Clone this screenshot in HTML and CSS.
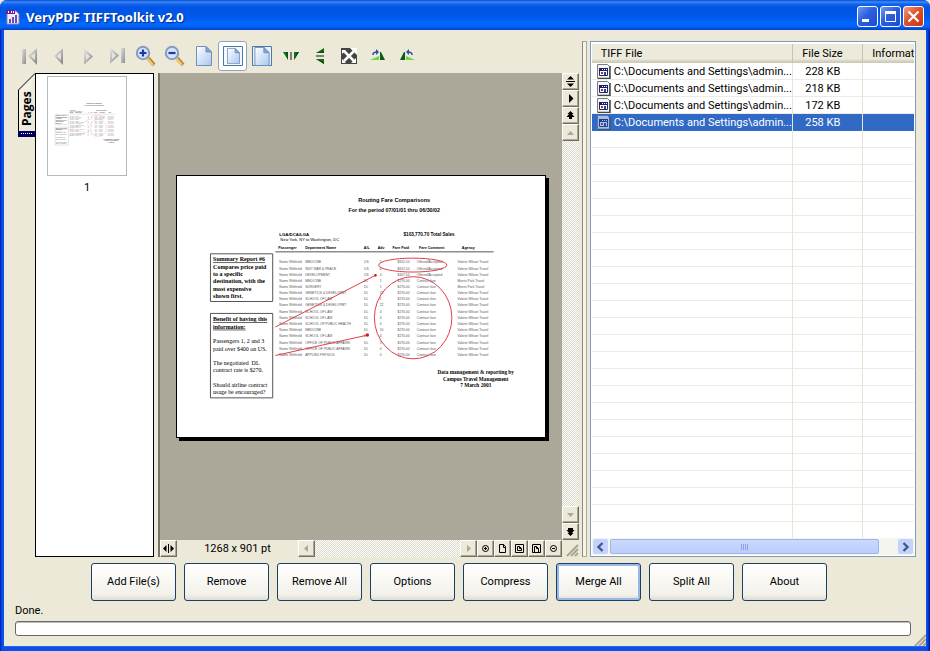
FILE: index.html
```html
<!DOCTYPE html>
<html lang="en">
<head>
<meta charset="utf-8">
<title>VeryPDF TIFFToolkit v2.0</title>
<link rel="stylesheet" href="styles.css">
</head>
<body>
<svg class="defs" aria-hidden="true">
  <defs>
    <linearGradient id="grey" x1="0" y1="0" x2="1" y2="1"><stop offset="0" stop-color="#dededc"/><stop offset="1" stop-color="#8e8e8e"/></linearGradient>
    <linearGradient id="paper" x1="0" y1="0" x2="1" y2="1"><stop offset="0" stop-color="#ffffff"/><stop offset="1" stop-color="#a9c6ee"/></linearGradient>
    <symbol id="file-icon" viewBox="0 0 14 15">
      <path d="M.5 .5h10l2 2v12h-12z" fill="#f4f4f4" stroke="#777a80"/>
      <path d="M13 2v12.500H1" fill="none" stroke="#44474c" stroke-width="1.500"/>
      <path d="M2.500 4.500h8v7h-8z" fill="#fff" stroke="#202860"/>
      <path d="M2 4h9v3H2z" fill="#14206e"/>
      <path d="M5 5h1v1H5zM7 5h1v1H7zM9 5h1v1H9z" fill="#fff"/>
      <path d="M4 8h2v2H4z" fill="#c02828"/><path d="M7 8h2v3H7z" fill="#2438c8"/>
    </symbol>
    <symbol id="page-shape" viewBox="0 0 16 20">
      <path d="M.5.5h9.500l5.500 5.500v13.500H.5z" fill="url(#paper)" stroke="#6f8fbc"/>
      <path d="M10 .5V6h5.500z" fill="#86a4d0" stroke="#6f8fbc"/>
    </symbol>
  </defs>
</svg>

<div class="window">
  <header class="titlebar">
    <svg class="app-icon" width="14" height="16" viewBox="0 0 14 16"><path d="M1 2h9l3 3v10H1z" fill="#eeeaf8" stroke="#8b86b8"/><path d="M0 1h9v4H0z" fill="#6a1fa0"/><path d="M2 2h1v2H2zM5 2h1v2H5zM7 2h1v2H7z" fill="#fff"/><path d="M3 10h2v4H3zM6 8h2v6H6zM9 6h2v8H9z" fill="#6d4fb0"/></svg>
    <h1>VeryPDF TIFFToolkit v2.0</h1>
    <div class="caption-buttons">
      <button class="caption" type="button" aria-label="Minimize"><svg width="19" height="19" viewBox="0 0 19 19"><path d="M4 12h7v3H4z" fill="#fff"/></svg></button>
      <button class="caption" type="button" aria-label="Maximize"><svg width="19" height="19" viewBox="0 0 19 19"><path d="M4.500 5h10v9.500h-10z" fill="none" stroke="#fff"/><path d="M4 4h11v3H4z" fill="#fff"/></svg></button>
      <button class="caption close" type="button" aria-label="Close"><svg width="19" height="19" viewBox="0 0 19 19"><path d="M4.500 4.500l10 10M14.500 4.500l-10 10" stroke="#fff" stroke-width="2.200"/></svg></button>
    </div>
  </header>

  <main class="content">
    <div class="main-row">
      <section class="viewer">
        <div class="toolbar">
          <button class="tool" type="button" aria-label="First page"><svg width="20" height="20" viewBox="0 0 20 20"><path d="M2 3h4v15H2z" fill="url(#grey)"/><path d="M16 4.500v12L9.500 10z" fill="#e6e4dc" stroke="url(#grey)" stroke-width="2"/></svg></button>
          <button class="tool" type="button" aria-label="Previous page"><svg width="20" height="20" viewBox="0 0 20 20"><path d="M13 4.500v12L6.500 10z" fill="#e6e4dc" stroke="url(#grey)" stroke-width="2"/></svg></button>
          <button class="tool" type="button" aria-label="Next page"><svg width="20" height="20" viewBox="0 0 20 20"><path d="M7 4.500v12l6.500-6z" fill="#e6e4dc" stroke="url(#grey)" stroke-width="2"/></svg></button>
          <button class="tool" type="button" aria-label="Last page"><svg width="20" height="20" viewBox="0 0 20 20"><path d="M14 2h4v15h-4z" fill="url(#grey)"/><path d="M4 3.500v12l6.500-6z" fill="#e6e4dc" stroke="url(#grey)" stroke-width="2"/></svg></button>
          <button class="tool" type="button" aria-label="Zoom in"><svg width="22" height="22" viewBox="0 0 22 22"><path d="M13 13l6 7" stroke="#b88430" stroke-width="4"/><path d="M12 13l6 7" stroke="#f1cd78" stroke-width="2"/><circle cx="8" cy="8" r="6.200" fill="#d4e4fa" stroke="#8a9abc" stroke-width="2"/><path d="M4.500 8h7M8 4.500v7" stroke="#1c3aa0" stroke-width="2.200"/></svg></button>
          <button class="tool" type="button" aria-label="Zoom out"><svg width="22" height="22" viewBox="0 0 22 22"><path d="M13 13l6 7" stroke="#b88430" stroke-width="4"/><path d="M12 13l6 7" stroke="#f1cd78" stroke-width="2"/><circle cx="8" cy="8" r="6.200" fill="#d4e4fa" stroke="#8a9abc" stroke-width="2"/><path d="M4.500 8h7" stroke="#1c3aa0" stroke-width="2.200"/></svg></button>
          <button class="tool" type="button" aria-label="Actual size"><svg width="20" height="20" viewBox="0 0 20 20"><use href="#page-shape" x="2" y="0" width="16" height="20"/></svg></button>
          <button class="tool active" type="button" aria-label="Fit page"><svg width="20" height="20" viewBox="0 0 20 20"><path d="M.5.5h19v19H.5z" fill="#f4f8ff" stroke="#4f77ad"/><use href="#page-shape" x="4" y="2" width="13" height="16"/></svg></button>
          <button class="tool" type="button" aria-label="Fit width"><svg width="20" height="20" viewBox="0 0 20 20"><path d="M.5.5h19v19H.5z" fill="#e9f1fd" stroke="#4f77ad"/><use href="#page-shape" x="2" y="1" width="16" height="19"/></svg></button>
          <button class="tool" type="button" aria-label="Flip horizontally"><svg width="18" height="18" viewBox="0 0 18 18"><path d="M1 5h5v8zM17 5h-5v8z" fill="#107018"/><path d="M4 5h2v8zM17 5h-2l-3 8z" fill="#084c10"/><path d="M9 5v8" stroke="#111"/></svg></button>
          <button class="tool" type="button" aria-label="Flip vertically"><svg width="18" height="18" viewBox="0 0 18 18"><path d="M13 1v5H5zM13 17v-5H5z" fill="#107018"/><path d="M13 4v2H5zM13 17v-2l-8-3z" fill="#084c10"/><path d="M5 9h8" stroke="#111"/></svg></button>
          <button class="tool" type="button" aria-label="Full screen"><svg width="16" height="16" viewBox="0 0 16 16"><path d="M0 0h16v16H0z" fill="#444"/><path d="M3 3l10 10M13 3L3 13" stroke="#fff" stroke-width="2.500"/><path d="M1 2h4L1 6zM16 0v7L9 0zM1 15v-4l4 4zM15 15h-5l5-5z" fill="#fff"/></svg></button>
          <button class="tool" type="button" aria-label="Rotate right"><svg width="18" height="18" viewBox="0 0 18 18"><path d="M1 13l9-4v4z" fill="#6cd83c"/><path d="M11 13V5h1l4 8z" fill="#0c5c18"/><path d="M4 8c0-2 1-3 4-3" fill="none" stroke="#2a50b0" stroke-width="1.500"/><path d="M7 2v6l3-3z" fill="#2a50b0"/></svg></button>
          <button class="tool" type="button" aria-label="Rotate left"><svg width="18" height="18" viewBox="0 0 18 18"><path d="M17 13L8 9v4z" fill="#6cd83c"/><path d="M7 13V5H6l-4 8z" fill="#0c5c18"/><path d="M14 8c0-2-1-3-4-3" fill="none" stroke="#2a50b0" stroke-width="1.500"/><path d="M11 2v6L8 5z" fill="#2a50b0"/></svg></button>
        </div>

        <div class="workspace">
          <button class="pages-tab" type="button" aria-label="Pages">
            <svg width="17" height="65" viewBox="0 0 17 65"><path d="M17 .5L.5 17v41" fill="#f3f1e6" stroke="#000"/><path d="M0 58h17v6H0z" fill="#000064"/><path d="M3 60.500h12" stroke="#fff" stroke-dasharray="1 1"/><text class="tab-text" transform="translate(13 53) rotate(-90)">Pages</text></svg>
          </button>
          <div class="thumbs">
            <figure>
              <div class="thumb"><svg viewBox="0 0 1110 789"><use href="#document"/></svg></div>
              <figcaption>1</figcaption>
            </figure>
          </div>
          <div class="document-pane">
            <div class="canvas">
              <svg class="sheet" viewBox="0 0 1110 789" role="img" aria-label="Routing Fare Comparisons">
                <g id="document">
                  <g class="sans bold">
                    <text class="s17" x="656" y="80" text-anchor="middle">Routing Fare Comparisons</text>
                    <text class="s16" x="656" y="110" text-anchor="middle">For the period 07/01/01 thru 06/30/02</text>
                    <text class="s13" x="309" y="181">LGA/DCA/LGA</text>
                    <text class="s14" x="684" y="180">$103,770.70 Total Sales</text>
                  </g>
                  <text class="sans s12" x="312" y="197">New York, NY to Washington, DC</text>
                  <g class="sans bold s11">
                    <text x="306" y="220">Passenger</text><text x="387" y="220">Department Name</text><text x="564" y="220">A/L</text><text x="606" y="220">Adv</text><text x="651" y="220">Fare Paid</text><text x="731" y="220">Fare Comment</text><text x="860" y="220">Agency</text>
                  </g>
                  <path d="M297 229h659" stroke="#555" stroke-width="3"/>
                  <g id="fare-rows" class="sans s10 rows"></g>
                  <g fill="#fff" stroke="#555" stroke-width="3"><path d="M101 235h188v144H101zM101 415h188v255H101z"/></g>
                  <g class="serif bold s18">
                    <text x="109" y="258" text-decoration="underline">Summary Report #6</text><text x="109" y="280">Compares price paid</text><text x="109" y="302">to a specific</text><text x="109" y="324">destination, with the</text><text x="109" y="346">most expensive</text><text x="109" y="368">shown first.</text>
                    <text x="109" y="439" text-decoration="underline">Benefit of having this</text><text x="109" y="461" text-decoration="underline">information:</text>
                  </g>
                  <g class="serif s18">
                    <text x="109" y="505">Passengers 1, 2 and 3</text><text x="109" y="527">paid over $400 on US.</text><text x="109" y="571">The negotiated&#160; DL</text><text x="109" y="593">contract rate is $270.</text><text x="109" y="637">Should airline contract</text><text x="109" y="659">usage be encouraged?</text>
                  </g>
                  <g class="serif bold s16" text-anchor="middle">
                    <text x="902" y="599">Data management &amp; reporting by</text><text x="902" y="618">Campus Travel Management</text><text x="902" y="637">7 March 2003</text>
                  </g>
                  <g fill="none" stroke="#df3d4a" stroke-width="3"><ellipse cx="712" cy="269" rx="103" ry="21"/><ellipse cx="713" cy="428" rx="117" ry="124"/><path d="M297 456L599 300M297 542L577 480"/></g>
                  <g fill="#c8202e"><circle cx="599" cy="300" r="4"/><circle cx="575" cy="480" r="5"/></g>
                </g>
              </svg>
            </div>
            <div class="vscroll">
              <button class="sb" type="button" aria-label="Fit height"><svg width="11" height="11"><path d="M5.500 0L9 3.500H2zM5.500 11L9 7.500H2zM1 5h9v1H1z"/></svg></button>
              <button class="sb" type="button" aria-label="Next"><svg width="11" height="11"><path d="M4 1v9l4.500-4.500z"/></svg></button>
              <button class="sb" type="button" aria-label="Top"><svg width="11" height="11"><path d="M5.500 1L8.500 4H7l2.500 3H7v2H4V7H1.500L4 4H2.500z"/></svg></button>
              <button class="sb off" type="button" aria-label="Up" disabled><svg width="11" height="11"><path d="M5.500 4L9 8H2z"/></svg></button>
              <div class="track"></div>
              <button class="sb off" type="button" aria-label="Down" disabled><svg width="11" height="11"><path d="M5.500 8L9 4H2z"/></svg></button>
              <button class="sb" type="button" aria-label="Bottom"><svg width="11" height="11"><path d="M5.500 10L8.500 7H7l2.500-3H8V2H3v2H1.500L4 7H2.500z"/></svg></button>
            </div>
            <div class="hscroll">
              <button class="sb" type="button" aria-label="Toggle pages"><svg width="11" height="11"><path d="M0 5.500L3.500 2v7zM11 5.500L7.500 2v7zM5 1h1v9H5z"/></svg></button>
              <span class="page-size">1268 x 901 pt</span>
              <button class="sb off" type="button" aria-label="Left" disabled><svg width="11" height="11"><path d="M3 5.500L7 2v7z"/></svg></button>
              <div class="track"></div>
              <button class="sb off" type="button" aria-label="Right" disabled><svg width="11" height="11"><path d="M8 5.500L4 2v7z"/></svg></button>
              <button class="sb line" type="button" aria-label="Zoom in"><svg width="11" height="11"><circle cx="5.500" cy="5.500" r="3"/><path d="M4 5.500h3M5.500 4v3"/></svg></button>
              <button class="sb line" type="button" aria-label="Actual size"><svg width="11" height="11"><path d="M2.500 1.500h4l2 2v6h-6zM6.500 1.500v3h2"/></svg></button>
              <button class="sb line" type="button" aria-label="Fit page"><svg width="11" height="11"><path d="M1.500 1.500h8v8h-8zM3.500 3.500h2l2 2v2h-4zM5.500 3.500v2h2"/></svg></button>
              <button class="sb line" type="button" aria-label="Fit width"><svg width="11" height="11"><path d="M1.500 1.500h8v8h-8zM3.500 9V3.500h2l2 2V9M5.500 3.500v2h2"/></svg></button>
              <button class="sb line" type="button" aria-label="Zoom out"><svg width="11" height="11"><circle cx="5.500" cy="5.500" r="3"/><path d="M4 5.500h3"/></svg></button>
            </div>
            <svg class="grip" width="17" height="17" viewBox="0 0 17 17"><path d="M5 16L16 5M9 16l7-7M13 16l3-3" stroke="#aaa692" stroke-width="2"/></svg>
          </div>
        </div>
      </section>

      <div class="splitter"></div>

      <section class="file-list">
        <div class="list-body">
          <table>
            <colgroup><col class="col-name"><col class="col-size"><col></colgroup>
            <thead><tr><th>TIFF File</th><th>File Size</th><th>Information</th></tr></thead>
            <tbody>
              <tr><td><div class="name"><svg width="14" height="15"><use href="#file-icon"/></svg><span>C:\Documents and Settings\admin...</span></div></td><td>228 KB</td><td></td></tr>
              <tr><td><div class="name"><svg width="14" height="15"><use href="#file-icon"/></svg><span>C:\Documents and Settings\admin...</span></div></td><td>218 KB</td><td></td></tr>
              <tr><td><div class="name"><svg width="14" height="15"><use href="#file-icon"/></svg><span>C:\Documents and Settings\admin...</span></div></td><td>172 KB</td><td></td></tr>
              <tr class="selected"><td><div class="name"><svg width="14" height="15"><use href="#file-icon"/></svg><span>C:\Documents and Settings\admin...</span></div></td><td>258 KB</td><td></td></tr>
            </tbody>
          </table>
        </div>
        <div class="xp-scroll">
          <button class="xp-arrow" type="button" aria-label="Scroll left"><svg width="9" height="10" viewBox="0 0 9 10"><path d="M6.500 1L2.500 5l4 4" fill="none" stroke="#42598c" stroke-width="2.400"/></svg></button>
          <div class="xp-thumb"><i></i><i></i><i></i><i></i></div>
          <button class="xp-arrow" type="button" aria-label="Scroll right"><svg width="9" height="10" viewBox="0 0 9 10"><path d="M2.500 1l4 4-4 4" fill="none" stroke="#42598c" stroke-width="2.400"/></svg></button>
        </div>
      </section>
    </div>

    <div class="actions">
      <button type="button">Add File(s)</button>
      <button type="button">Remove</button>
      <button type="button">Remove All</button>
      <button type="button">Options</button>
      <button type="button">Compress</button>
      <button type="button" class="default">Merge All</button>
      <button type="button">Split All</button>
      <button type="button">About</button>
    </div>
    <div class="status" id="status">Done.</div>
    <div class="progress" role="progressbar" aria-labelledby="status"></div>
    <svg class="size-grip" width="12" height="12" viewBox="0 0 12 12"><path d="M1 12L12 1M5 12l7-7M9 12l3-3" stroke="#aaa692" stroke-width="2"/></svg>
  </main>
</div>
<script src="script.js"></script>
</body>
</html>
```
FILE: styles.css
```css
* { box-sizing: border-box; }

body {
  margin: 0;
  background: #ece9d8;
  color: #000;
  font: 11px/14px Roboto, "Liberation Sans", sans-serif;
}

button { padding: 0; border: 0; background: none; font: inherit; color: inherit; }
svg { display: block; flex: none; }
.defs { position: absolute; width: 0; height: 0; }

.window {
  display: flex;
  flex-direction: column;
  min-height: 100vh;
  padding: 0 4px 4px;
  border-radius: 7px 7px 0 0;
  background: linear-gradient(90deg, #001ea0 0, #0a50ee 2px, #0a50ee 4px, #0a50ee calc(100% - 4px), #0a50ee calc(100% - 3px), #00138c 100%);
}

.titlebar {
  display: flex;
  align-items: center;
  gap: 6px;
  height: 30px;
  margin: 0 -4px;
  padding: 3px 6px 0 6px;
  border-radius: 7px 7px 0 0;
  background: linear-gradient(#0a4ad0 0, #3b8cf8 2px, #1264ee 4px, #0054e3 8px, #0058ea 16px, #0268fe 24px, #0260f4 27px, #0040c4 30px);
}
.titlebar h1 {
  flex: 1;
  margin: 0;
  color: #fff;
  font: bold 13px/18px "Noto Sans", sans-serif;
  text-shadow: 1px 1px 1px #0a2a80;
}
.caption-buttons { display: flex; gap: 2px; }
.caption {
  width: 21px;
  height: 21px;
  border: 1px solid #fff;
  border-radius: 3px;
  background: linear-gradient(135deg, #6f9af4, #2a5fe0 45%, #1c4ccc);
}
.caption.close { background: linear-gradient(135deg, #f0a088, #e0502c 45%, #c23812); }

.content {
  position: relative;
  display: flex;
  flex: 1;
  flex-direction: column;
  padding: 11px 10px 10px 11px;
  background: #ece9d8;
  border-bottom: 1px solid #2c64e8;
}
.main-row { display: flex; flex: 1; min-height: 400px; }

.viewer { display: flex; flex: 565 1 0; flex-direction: column; min-width: 0; }
.toolbar { display: flex; height: 32px; }
.tool { display: flex; align-items: center; justify-content: center; width: 29px; height: 30px; }
.tool.active { border: 1px solid #8fa5bd; border-radius: 3px; background: #fff; }

.workspace { display: flex; flex: 1; margin-left: 3px; min-height: 0; }
.pages-tab { align-self: flex-start; }
.tab-text { font: bold 12px "Open Sans", sans-serif; }
.thumbs { width: 119px; border: 1px solid #000; background: #fff; }
.thumbs figure { margin: 2px 0 0 11px; width: 80px; }
.thumb { display: flex; align-items: center; height: 100px; border: 1px solid #b8b8b8; }
.thumb svg { width: 100%; opacity: 0.7; }
.thumbs figcaption { margin-top: 5px; text-align: center; }

.document-pane {
  display: grid;
  flex: 1;
  grid-template-columns: 1fr 17px;
  grid-template-rows: 1fr 17px;
  margin-left: 4px;
  min-width: 0;
  border-left: 2px solid #77756a;
}
.canvas { display: grid; place-items: center; background: #aca899; min-width: 0; }
.sheet { width: 92%; border: 1px solid #000; background: #fff; box-shadow: 3px 3px 0 #000; }

.sans { font-family: "Liberation Sans", sans-serif; }
.serif { font-family: "Liberation Serif", serif; }
.bold { font-weight: bold; }
.rows { fill: #555; }
.s10 { font-size: 10px; }
.s11 { font-size: 11px; }
.s12 { font-size: 12px; }
.s13 { font-size: 13px; }
.s14 { font-size: 14px; }
.s16 { font-size: 16px; }
.s17 { font-size: 17px; }
.s18 { font-size: 18px; }

.vscroll, .hscroll { display: flex; }
.vscroll { flex-direction: column; }
.hscroll { grid-row: 2; }
.track {
  flex: 1;
  background: repeating-conic-gradient(#fff 0 25%, #dcd9ca 0 50%) 0 0 / 2px 2px;
}
.sb {
  display: flex;
  flex: none;
  align-items: center;
  justify-content: center;
  width: 17px;
  height: 17px;
  border: 1px solid;
  border-color: #fff #716f64 #716f64 #fff;
  background: #ece9d8;
  box-shadow: inset -1px -1px 0 #aca899;
}
.sb.off svg { fill: #aca899; }
.sb.line svg { fill: none; stroke: #000; }
.page-size { width: 121px; text-align: center; line-height: 17px; }
.grip { grid-area: 2 / 2; }

.splitter { flex: none; width: 5px; margin: 0 3px; border: 1px solid; border-color: #aca899 #aca899 #aca899 #8c8a7c; background: #f6f4ea; }

.file-list {
  display: flex;
  flex: 323 1 0;
  flex-direction: column;
  min-width: 0;
  padding: 2px 1px 1px;
  border: 1px solid #7f9db9;
  background: #fff;
}
.list-body {
  flex: 1;
  overflow: hidden;
  background:
    linear-gradient(#e8e5d6, #e8e5d6) 200px 0 / 1px 100% no-repeat,
    linear-gradient(#e8e5d6, #e8e5d6) 270px 0 / 1px 100% no-repeat,
    repeating-linear-gradient(#fff 0 16px, #ecebe4 16px 17px) 0 2px;
}
table { width: 100%; border-collapse: collapse; table-layout: fixed; }
.col-name { width: 201px; }
.col-size { width: 70px; }
th {
  height: 19px;
  padding: 0 0 0 9px;
  overflow: hidden;
  border-right: 1px solid #c7c5b2;
  background: linear-gradient(#ebeadb 0 15px, #e2decd 16px, #d6d2c2 17px, #cbc7b8 19px);
  font-weight: normal;
  text-align: left;
  white-space: nowrap;
}
td { height: 17px; padding: 0 0 0 12px; border-right: 1px solid #e8e5d6; white-space: nowrap; }
td:first-child { padding-left: 5px; }
th:last-child, td:last-child { border-right: 0; }
.name { display: flex; align-items: center; gap: 3px; height: 16px; }
.selected { background: linear-gradient(#316ac5, #316ac5) 19px 0 no-repeat #316ac5; color: #fff; }
.selected svg { opacity: 0.6; }

.xp-scroll { display: flex; justify-content: space-between; gap: 2px; height: 17px; padding: 1px; background: #f5f5f0; }
.xp-arrow {
  display: flex;
  align-items: center;
  justify-content: center;
  width: 15px;
  height: 15px;
  border-radius: 2px;
  background: #c3d3fd;
}
.xp-thumb {
  display: flex;
  align-items: center;
  justify-content: center;
  gap: 1px;
  width: 84%;
  margin-right: auto;
  border: 1px solid #9db5ea;
  border-radius: 2px;
  background: linear-gradient(#cbd9fe, #bccdfb);
}
.xp-thumb i { width: 1px; height: 6px; background: #8ba3e2; }

.actions { display: flex; justify-content: center; gap: 8px; margin: 6px 0 2px; padding-right: 13px; }
.actions button {
  flex: 0 1 85px;
  height: 38px;
  border: 1px solid #1c3f66;
  border-radius: 3px;
  background: linear-gradient(#fff, #f2f1ea 85%, #dedbd0);
}
.actions .default { box-shadow: inset 0 0 0 2px #98b8ea; }

.status { line-height: 16px; }
.progress { height: 15px; margin: 2px 5px 0 0; border: 1px solid #686868; border-radius: 3px; background: #fff; box-shadow: inset 0 1px 0 #bebebe; }
.size-grip { position: absolute; right: 0; bottom: 0; }
```
FILE: script.js
```js
// Department, airline, advance days, fare, comment, agency
const fares = [
  ["MEDICINE", "US", "5", "$612.50", "Offered/Accepted", "Valerie Wilson Travel"],
  ["INST WAR & PEACE", "US", "6", "$612.50", "Offered/Accepted", "Valerie Wilson Travel"],
  ["DEVELOPMENT", "US", "4", "$407.50", "Offered/Accepted", "Valerie Wilson Travel"],
  ["MEDICINE", "DL", "1", "$270.00", "Contract fare", "Morris Park Travel"],
  ["SURGERY", "DL", "1", "$270.00", "Contract fare", "Morris Park Travel"],
  ["GENETICS & DEVELOPMT", "DL", "22", "$270.00", "Contract fare", "Valerie Wilson Travel"],
  ["SCHOOL OF LAW", "DL", "1", "$270.00", "Contract fare", "Valerie Wilson Travel"],
  ["GENETICS & DEVELOPMT", "DL", "22", "$270.00", "Contract fare", "Valerie Wilson Travel"],
  ["SCHOOL OF LAW", "DL", "4", "$270.00", "Contract fare", "Valerie Wilson Travel"],
  ["SCHOOL OF LAW", "DL", "4", "$270.00", "Contract fare", "Valerie Wilson Travel"],
  ["SCHOOL  OF PUBLIC HEALTH", "DL", "0", "$270.00", "Contract fare", "Valerie Wilson Travel"],
  ["MEDICINE", "DL", "10", "$270.00", "Contract fare", "Valerie Wilson Travel"],
  ["SCHOOL OF LAW", "DL", "4", "$270.00", "Contract fare", "Valerie Wilson Travel"],
  ["OFFICE OF PUBLIC AFFAIRS", "DL", "5", "$270.00", "Contract fare", "Valerie Wilson Travel"],
  ["OFFICE OF PUBLIC AFFAIRS", "DL", "0", "$270.00", "Contract fare", "Valerie Wilson Travel"],
  ["APPLIED PHYSICS", "DL", "0", "$270.00", "Contract fare", "Valerie Wilson Travel"]
];
const columns = [309, 387, 565, 612, 666, 724, 847];
const group = document.getElementById("fare-rows");
fares.forEach((fare, row) => {
  ["Name Withheld", ...fare].forEach((value, col) => {
    const text = document.createElementNS("http://www.w3.org/2000/svg", "text");
    text.setAttribute("x", columns[col]);
    text.setAttribute("y", Math.round(264 + row * 18.6));
    text.textContent = value;
    group.append(text);
  });
});
```
